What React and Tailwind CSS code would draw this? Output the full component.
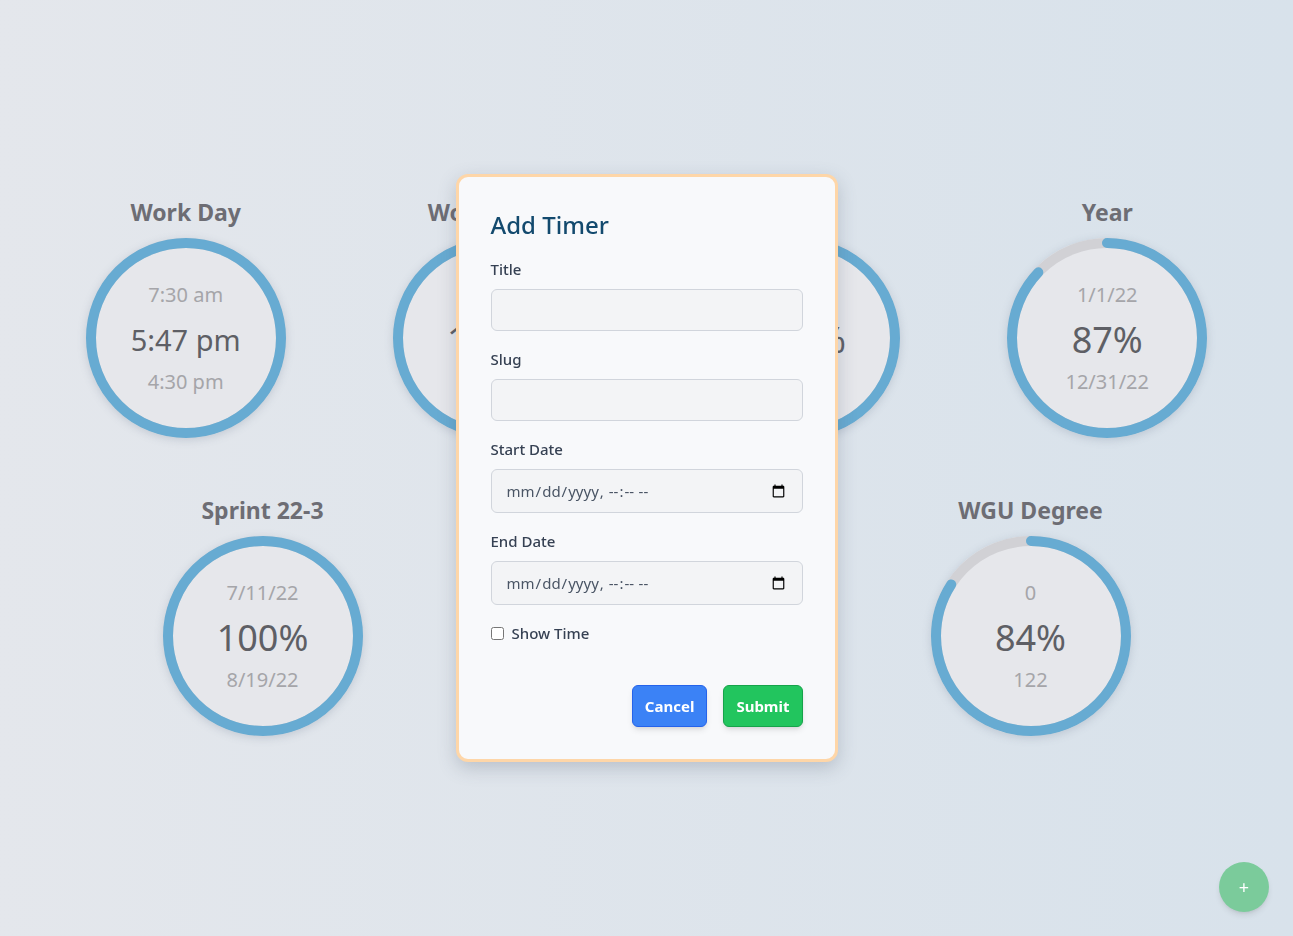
import { useState } from "react";

const topRow = [
  { title: "Work Day", start: "7:30 am", value: "5:47 pm", end: "4:30 pm", pct: 100, time: true },
  { title: "Work Week", start: "7/11/22", value: "100%", end: "7/15/22", pct: 100 },
  { title: "Month", start: "7/1/22", value: "100%", end: "7/31/22", pct: 100 },
  { title: "Year", start: "1/1/22", value: "87%", end: "12/31/22", pct: 87 },
];

const bottomRow = [
  { title: "Sprint 22-3", start: "7/11/22", value: "100%", end: "8/19/22", pct: 100 },
  { title: "Quarter", start: "7/1/22", value: "100%", end: "9/30/22", pct: 100 },
  { title: "WGU Degree", start: "0", value: "84%", end: "122", pct: 84 },
];

const R = 95;
const C = 2 * Math.PI * R;

const Ring = ({ pct }) => (
  <svg className="absolute inset-0" width="200" height="200" viewBox="0 0 200 200">
    <circle cx="100" cy="100" r={R} fill="none" stroke="#d1d1d5" strokeWidth="10" />
    <circle
      cx="100"
      cy="100"
      r={R}
      fill="none"
      stroke="#67abd2"
      strokeWidth="10"
      strokeLinecap={pct < 100 ? "round" : "butt"}
      strokeDasharray={`${(C * pct) / 100} ${C}`}
      transform="rotate(-90 100 100)"
    />
  </svg>
);

const TimerCard = ({ timer }) => (
  <div className="flex w-[243px] flex-col items-center">
    <h2 className="mb-2.5 text-[23px] leading-8 font-bold text-[#6d6d74]">{timer.title}</h2>
    <div className="relative h-[200px] w-[200px] rounded-full bg-[#e6e7eb] shadow-[0_2px_8px_rgba(100,116,139,0.25)]">
      <Ring pct={timer.pct} />
      <div className="relative flex h-full flex-col items-center justify-center">
        <span className="text-xl leading-7 text-[#a5a5a9]">{timer.start}</span>
        <span
          className={`mt-[11px] mb-2 leading-10 text-[#5e5f65] ${timer.time ? "text-[29px]" : "text-[36px]"}`}
        >
          {timer.value}
        </span>
        <span className="text-xl leading-7 text-[#a5a5a9]">{timer.end}</span>
      </div>
    </div>
  </div>
);

const Field = ({ label, type = "text" }) => (
  <div className="mb-[18px]">
    <label className="mb-2.5 block text-[15px] leading-5 font-medium text-gray-700">{label}</label>
    <input
      type={type}
      className={`block w-full rounded-md border border-gray-300 bg-gray-100 px-3.5 text-[15px] text-gray-600 outline-none ${
        type === "text" ? "h-[42px]" : "h-[44px]"
      }`}
    />
  </div>
);

export default function App() {
  const [showTime, setShowTime] = useState(false);

  return (
    <div
      className="relative flex min-h-screen flex-col justify-center gap-14 bg-linear-to-r from-[#e4e7ec] to-[#d8e2eb] pb-1"
      style={{ fontFamily: '"Noto Sans", "Open Sans", sans-serif' }}
    >
      <div className="flex w-full justify-evenly">
        {topRow.map((t) => (
          <TimerCard key={t.title} timer={t} />
        ))}
      </div>
      <div className="flex w-full justify-evenly">
        {bottomRow.map((t) => (
          <TimerCard key={t.title} timer={t} />
        ))}
      </div>

      {/* Add Timer modal */}
      <div className="fixed inset-0 flex items-center justify-center">
        <div className="w-[382px] rounded-xl border-[3px] border-[#fed6a8] bg-[#f8f9fb] p-8 shadow-[0_6px_18px_rgba(71,85,105,0.25)]">
          <h1 className="mb-[18px] text-2xl leading-8 font-medium text-[#134a6e]">Add Timer</h1>
          <Field label="Title" />
          <Field label="Slug" />
          <Field label="Start Date" type="datetime-local" />
          <Field label="End Date" type="datetime-local" />
          <label className="flex items-center gap-2 text-[15px] leading-5 font-medium text-gray-700">
            <input
              type="checkbox"
              checked={showTime}
              onChange={(e) => setShowTime(e.target.checked)}
              className="h-[13px] w-[13px]"
            />
            Show Time
          </label>
          <div className="mt-[42px] flex justify-end gap-4">
            <button className="h-[42px] rounded-md border border-[#2563eb] bg-[#3b82f6] px-3 text-[15px] font-bold text-white shadow-md">
              Cancel
            </button>
            <button className="h-[42px] rounded-md border border-[#16a34a] bg-[#22c55e] px-3 text-[15px] font-bold text-white shadow-md">
              Submit
            </button>
          </div>
        </div>
      </div>

      <button className="fixed right-6 bottom-6 flex h-[50px] w-[50px] items-center justify-center rounded-full bg-[#7bcb9b] text-lg text-white shadow-md">
        +
      </button>
    </div>
  );
}
